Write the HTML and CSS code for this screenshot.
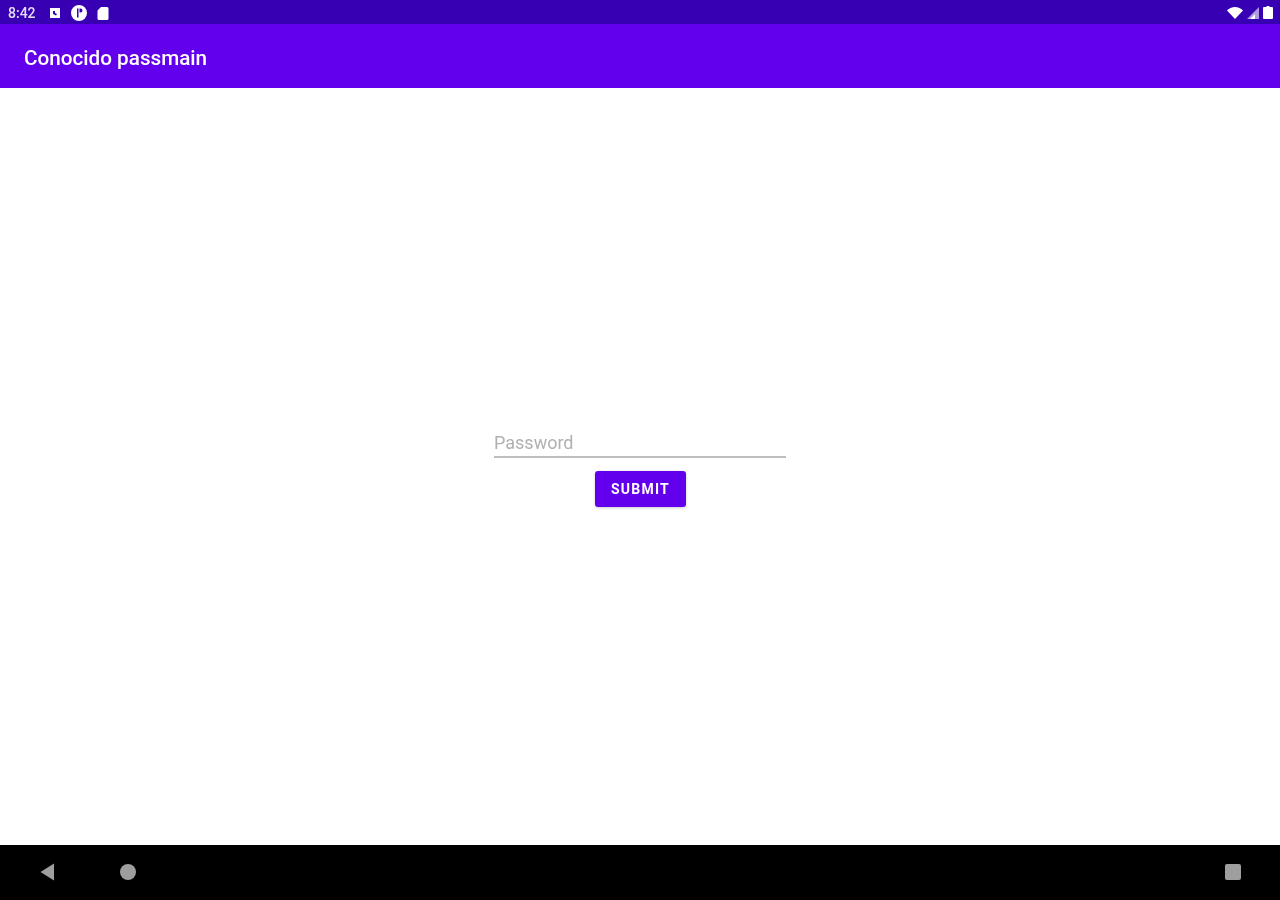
FILE: index.html
```html
<!DOCTYPE html>
<html lang="en">
<head>
    <meta charset="UTF-8">
    <title>Conocido passmain</title>
    <link rel="stylesheet" href="styles.css">
</head>
<body>
    <div class="status-bar">
        <div class="status-left soft">
            <span class="status-time">8:42</span>
            <svg class="status-icon" width="12" height="12" viewBox="0 0 12 12"><path fill="#fff" fill-rule="evenodd" d="M1 1h10v10H1z M4 4v3l3 1.5 1-1.5-2-1V4z"/></svg>
            <svg class="status-icon" width="16" height="16" viewBox="0 0 16 16"><path fill="#fff" fill-rule="evenodd" d="M8 0a8 8 0 1 0 0 16A8 8 0 0 0 8 0z M6 3.500h1.500v9H6z M8.500 3.500h1a2 2 0 0 1 0 4h-1z"/></svg>
            <svg class="status-icon" width="12" height="14" viewBox="0 0 12 14"><path fill="#fff" d="M4 1h6a1.500 1.500 0 0 1 1.500 1.500v10A1.500 1.500 0 0 1 10 14H2a1.500 1.500 0 0 1-1.500-1.500V4.500z"/></svg>
        </div>
        <div class="status-right soft">
            <svg width="16" height="12" viewBox="0 0 16 12"><path fill="#fff" d="M0 3.500C2 1.500 5 0 8 0s6 1.500 8 3.500L8 12z"/></svg>
            <svg width="12" height="12" viewBox="0 0 12 12"><path fill="#fff" opacity="0.6" d="M0 12L12 0v12z"/><path fill="#fff" d="M3 12l5-5v5z"/></svg>
            <svg width="10" height="13" viewBox="0 0 10 13"><path fill="#fff" d="M3.500 0h3v1H9a1 1 0 0 1 1 1v10a1 1 0 0 1-1 1H1a1 1 0 0 1-1-1V2a1 1 0 0 1 1-1h2.500z"/></svg>
        </div>
    </div>

    <header class="app-bar">
        <h1 class="soft">Conocido passmain</h1>
    </header>

    <main class="content">
        <form class="password-form soft">
            <input class="password-input" type="password" placeholder="Password">
            <button class="submit-btn" type="button">SUBMIT</button>
        </form>
    </main>

    <nav class="nav-bar">
        <div class="nav-left soft">
            <svg width="16" height="18" viewBox="0 0 16 18"><path fill="#9e9e9e" d="M15 0.500v17L1.500 9z"/></svg>
            <span class="nav-home"></span>
        </div>
        <span class="nav-recents soft"></span>
    </nav>
</body>
</html>
```

FILE: styles.css
```css
* {
    box-sizing: border-box;
}
html, body {
    height: 100%;
}
body {
    margin: 0;
    display: flex;
    flex-direction: column;
    height: 900px;
    overflow: hidden;
    background: #fff;
    font-family: Roboto, "Liberation Sans", sans-serif;
}
.soft {
    filter: blur(0.6px); /* the source capture is soft */
}

/* Status bar */
.status-bar {
    height: 24px;
    flex: none;
    display: flex;
    align-items: center;
    justify-content: space-between;
    padding: 1px 7px 0 8px;
    background: #3700B3;
    color: #fff;
}
.status-left {
    display: flex;
    align-items: center;
}
.status-time {
    width: 41px;
    font-size: 14px;
    font-weight: 500;
    color: #e4dcf5;
}
.status-icon {
    margin-right: 10px;
}
.status-right {
    display: flex;
    align-items: center;
    gap: 4px;
}

/* App bar */
.app-bar {
    height: 64px;
    flex: none;
    display: flex;
    align-items: center;
    padding: 3px 24px 0;
    background: #6200EE;
}
.app-bar h1 {
    margin: 0;
    font-size: 20.7px;
    font-weight: 500;
    color: #fff;
}

/* Form */
.content {
    flex: 1;
    display: flex;
    align-items: center;
    justify-content: center;
    background: #fff;
}
.password-form {
    width: 292px;
    display: flex;
    flex-direction: column;
    align-items: center;
    gap: 13px;
    margin-top: 3px;
}
.password-input {
    width: 100%;
    height: 28px;
    padding: 0;
    border: 0;
    border-bottom: 2px solid #bdbdbd;
    outline: none;
    background: transparent;
    font-family: inherit;
    font-size: 18px;
}
.password-input::placeholder {
    color: #b0b0b0;
    opacity: 1;
}
.submit-btn {
    width: 91px;
    height: 36px;
    padding: 1px 0 0 1px;
    border: 0;
    border-radius: 3px;
    background: #6200EE;
    box-shadow: 0 1px 3px rgba(0, 0, 0, 0.2);
    color: #fff;
    font-family: inherit;
    font-size: 14px;
    font-weight: 700;
    letter-spacing: 1.25px;
}

/* Navigation bar */
.nav-bar {
    height: 55px;
    flex: none;
    display: flex;
    align-items: center;
    justify-content: space-between;
    padding: 0 39px 1px;
    background: #000;
}
.nav-left {
    display: flex;
    align-items: center;
    gap: 65px;
}
.nav-home {
    width: 16px;
    height: 16px;
    border-radius: 50%;
    background: #9e9e9e;
}
.nav-recents {
    width: 16px;
    height: 16px;
    border-radius: 2px;
    background: #9e9e9e;
}
```
